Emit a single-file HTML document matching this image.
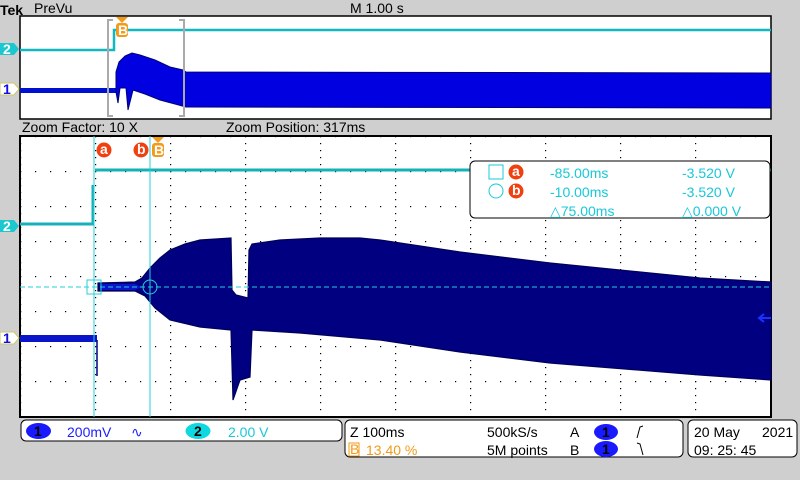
<!DOCTYPE html>
<html><head><meta charset="utf-8"><style>
html,body{margin:0;padding:0;background:#cfcfcf;width:800px;height:480px;overflow:hidden}
svg{display:block}
text{font-family:"Liberation Sans","DejaVu Sans",sans-serif;font-size:14px}
</style></head><body>
<svg width="800" height="480" viewBox="0 0 800 480" xmlns="http://www.w3.org/2000/svg">
<defs>
<pattern id="vd" x="20" y="136" width="75" height="7" patternUnits="userSpaceOnUse"><rect x="0" y="0" width="1.2" height="1.2" fill="#000"/></pattern>
<pattern id="hd" x="20" y="136" width="15" height="35" patternUnits="userSpaceOnUse"><rect x="0" y="0" width="1.2" height="1.2" fill="#000"/></pattern>
</defs>
<rect width="800" height="480" fill="#cfcfcf"/>
<!-- header -->
<text x="0" y="15" font-weight="bold" font-size="17" font-family="Liberation Serif, serif">Tek</text>
<text x="34" y="13">PreVu</text>
<text x="350" y="13">M 1.00 s</text>
<!-- preview -->
<rect x="20" y="16" width="751" height="103" fill="#fff" stroke="#000" stroke-width="1.5"/>
<path d="M20 50H114V30H771" fill="none" stroke="#11b8c0" stroke-width="2.5"/>
<path d="M20 88H116V93H20Z" fill="#0010d0"/>
<polygon points="116,72 119,62 125,56 132,53 140,55 155,60 170,67 183,70 186,72 771,73 771,108 186,107 175,104 160,100 145,94 133,90 128,110 126,88 120,88 118,103 116,92" fill="#0000e0" stroke="#00007a" stroke-width="1"/>
<path d="M113 20H108V116H113M179 20H184V116H179" fill="none" stroke="#aaa" stroke-width="2"/>
<polygon points="116,17 128,17 122,23" fill="#f39a1a"/>
<rect x="116" y="23" width="12" height="14" rx="3" fill="#f39a1a"/><text x="118" y="35" fill="#fff" font-size="12" font-weight="bold">B</text>
<path d="M0 43H14L19 49L14 55H0Z" fill="#1cc8d0"/><text x="3" y="54" fill="#fff" font-weight="bold" font-size="13">2</text>
<path d="M0 83H14L19 89L14 95H0Z" fill="#fff" stroke="#c9c96a"/><text x="3" y="94" fill="#1010e0" font-weight="bold" font-size="13">1</text>
<text x="22" y="132">Zoom Factor: 10 X</text>
<text x="226" y="132">Zoom Position: 317ms</text>
<!-- main -->
<rect x="20" y="136" width="751" height="281" fill="#fff" stroke="#000" stroke-width="2"/>
<rect x="21" y="137" width="749" height="279" fill="url(#hd)"/>
<rect x="21" y="137" width="749" height="279" fill="url(#vd)"/>
<path d="M20 224H93V185M95 170H771" fill="none" stroke="#15b0b8" stroke-width="3"/>
<path d="M20 335H97V342H20Z" fill="#0a14c8"/>
<path d="M97 340V376" stroke="#000080" stroke-width="1.5"/>
<polygon points="98,283 135,282 142,278 150,268 160,258 170,250 185,244 200,240 231,238 232,290 236,295 248,298 249,250 252,244 280,240 320,238 360,238 380,240 460,252 550,263 700,278 771,282 771,380 700,375 550,363 460,352 380,340 300,333 252,330 250,377 240,380 233,400 231,330 200,327 170,320 155,308 145,296 135,291 98,291" fill="#000080" stroke="#00005a" stroke-width="1.2"/>
<polygon points="100,284 135,284 142,287 135,290 100,290" fill="#0a14c8"/>
<path d="M94 136V417M150 136V417" stroke="#22d0d8" stroke-width="1"/>
<path d="M20 287H771" stroke="#22d0d8" stroke-width="1" stroke-dasharray="5,3"/>
<rect x="87" y="280" width="14" height="14" fill="none" stroke="#22d0d8"/>
<circle cx="150" cy="287" r="7" fill="none" stroke="#22d0d8"/>
<path d="M771 318H760M764 314L759 318L764 322" stroke="#1a30ff" stroke-width="2" fill="none"/>
<circle cx="104" cy="150" r="7.5" fill="#f04010"/><text x="100" y="154" fill="#fff" font-size="12" font-weight="bold">a</text>
<circle cx="141" cy="150" r="7.5" fill="#f04010"/><text x="137" y="154" fill="#fff" font-size="12" font-weight="bold">b</text>
<polygon points="152,137 164,137 158,143" fill="#f39a1a"/>
<rect x="152" y="143" width="12" height="14" rx="3" fill="#f39a1a"/><text x="154" y="155" fill="#fff" font-size="12" font-weight="bold">B</text>
<path d="M0 220H14L19 226L14 232H0Z" fill="#1cc8d0"/><text x="3" y="231" fill="#fff" font-weight="bold" font-size="13">2</text>
<path d="M0 332H14L19 338L14 344H0Z" fill="#fff" stroke="#c9c96a"/><text x="3" y="343" fill="#1010e0" font-weight="bold" font-size="13">1</text>
<!-- readout -->
<rect x="470" y="161" width="300" height="57" rx="5" fill="#fff" stroke="#000"/>
<g fill="#18c8d8">
<rect x="489" y="165" width="14" height="14" fill="none" stroke="#18c8d8"/>
<circle cx="496" cy="191" r="7" fill="none" stroke="#18c8d8"/>
<text x="550" y="178">-85.00ms</text><text x="682" y="178">-3.520 V</text>
<text x="550" y="197">-10.00ms</text><text x="682" y="197">-3.520 V</text>
<text x="550" y="216">△75.00ms</text><text x="682" y="216">△0.000 V</text>
</g>
<circle cx="516" cy="172" r="7.5" fill="#f04010"/><text x="512" y="176" fill="#fff" font-size="12" font-weight="bold">a</text>
<circle cx="516" cy="191" r="7.5" fill="#f04010"/><text x="512" y="195" fill="#fff" font-size="12" font-weight="bold">b</text>
<!-- bottom -->
<rect x="21" y="420" width="321" height="21" rx="5" fill="#fff" stroke="#000"/>
<ellipse cx="38.5" cy="431" rx="12.5" ry="8" fill="#1a1aff"/><text x="34" y="436" font-weight="bold" font-size="13">1</text>
<text x="67" y="437" fill="#2020ff">200mV</text>
<text x="131" y="437" fill="#2020ff">∿</text>
<ellipse cx="198" cy="431" rx="12.5" ry="8" fill="#10d8e0"/><text x="194" y="436" font-weight="bold" font-size="13">2</text>
<text x="228" y="437" fill="#18c8d8">2.00 V</text>
<rect x="345" y="420" width="338" height="37" rx="5" fill="#fff" stroke="#000"/>
<text x="350" y="437">Z 100ms</text>
<rect x="349" y="443" width="10" height="13" fill="none" stroke="#f39a1a"/><text x="350" y="454" fill="#f39a1a" font-size="11">B</text>
<text x="366" y="455" fill="#f39a1a">13.40 %</text>
<text x="487" y="437">500kS/s</text><text x="570" y="437">A</text>
<text x="487" y="455">5M points</text><text x="570" y="455">B</text>
<ellipse cx="606" cy="432" rx="12" ry="8" fill="#1a1aff"/><text x="602" y="437" font-weight="bold" font-size="13">1</text>
<ellipse cx="606" cy="449" rx="12" ry="8" fill="#1a1aff"/><text x="602" y="454" font-weight="bold" font-size="13">1</text>
<path d="M637 438L640 427L643 426M637 443L640 444L643 455" stroke="#000" fill="none"/>
<rect x="688" y="420" width="109" height="37" rx="5" fill="#fff" stroke="#000"/>
<text x="694" y="437">20 May</text><text x="762" y="437">2021</text>
<text x="694" y="455">09: 25: 45</text>
</svg>
</body></html>
